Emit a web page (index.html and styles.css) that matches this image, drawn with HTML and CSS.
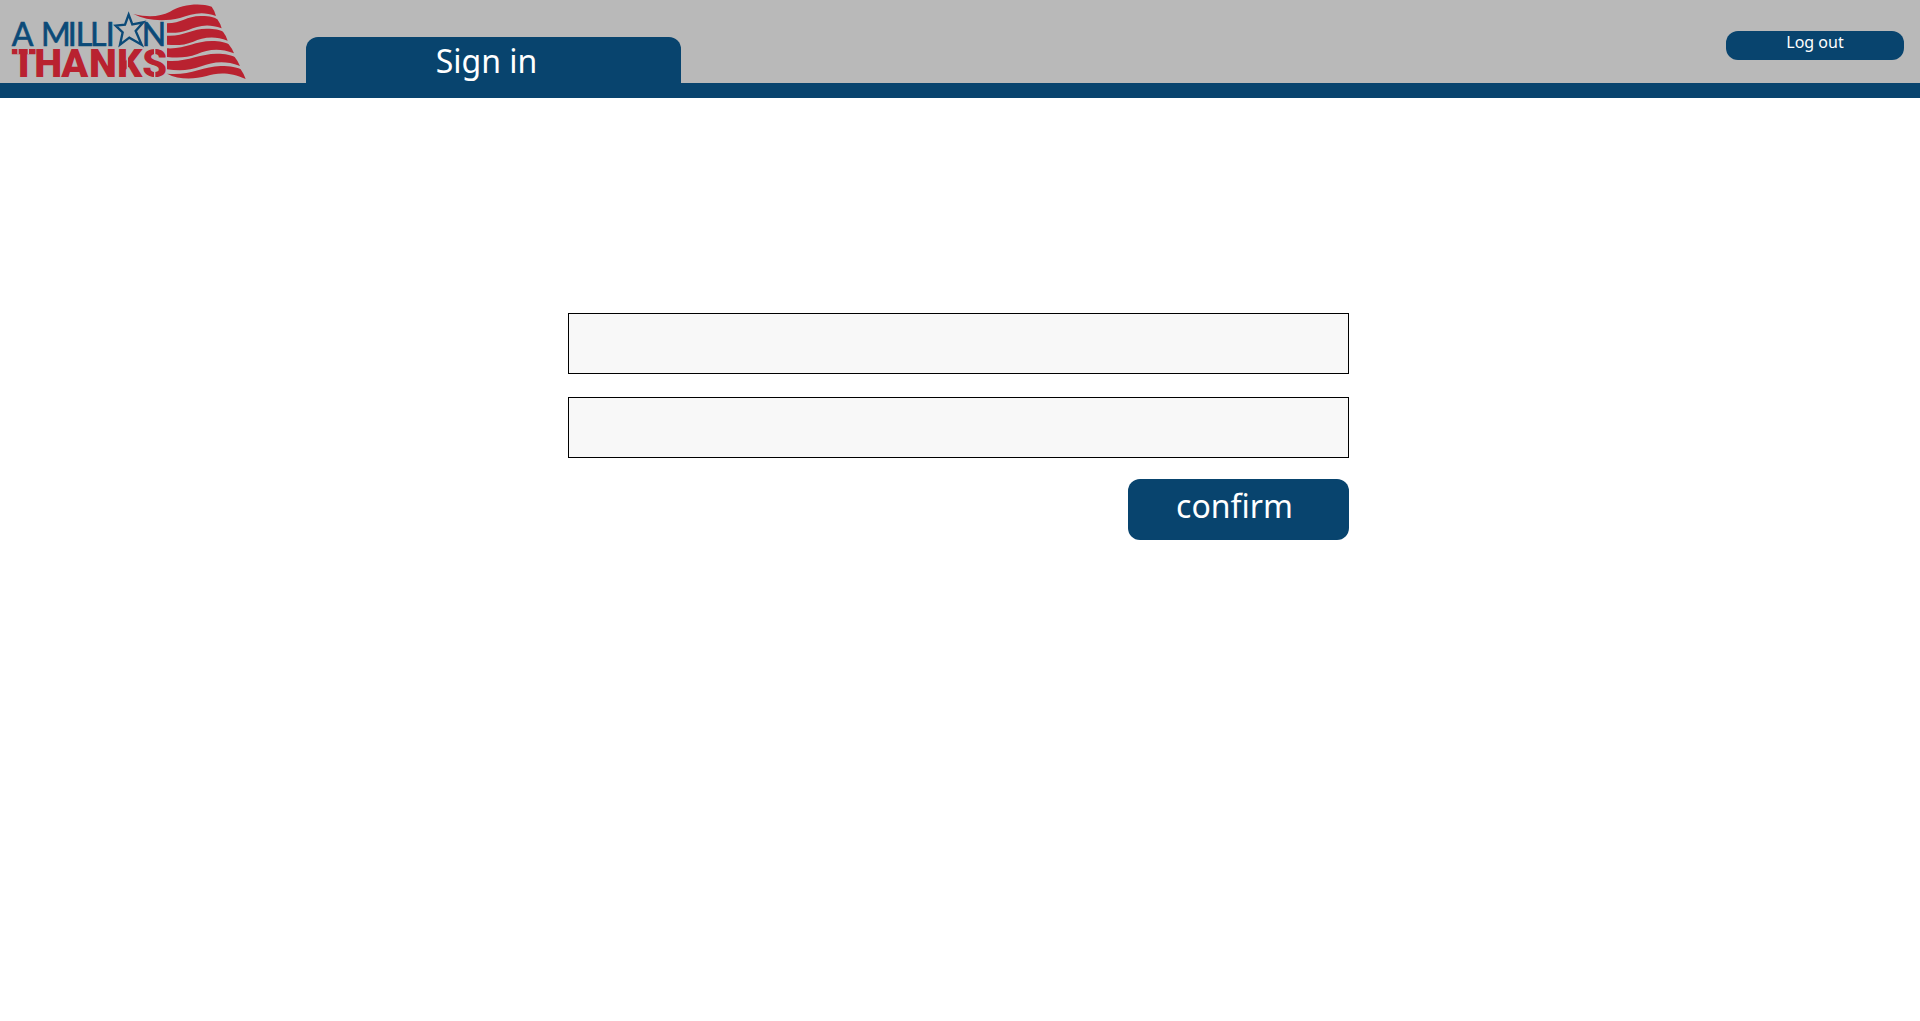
FILE: index.html
```html
<!DOCTYPE html>
<html lang="en">
<head>
<meta charset="utf-8">
<meta name="viewport" content="width=device-width, initial-scale=1">
<title>Sign in - A Million Thanks</title>
<link rel="stylesheet" href="styles.css">
</head>
<body>
<header class="site-header">
  <a class="logo" href="#" aria-label="A Million Thanks">
    <svg class="logo-art" viewBox="0 0 750 249" aria-hidden="true">
      <text class="logo-top" y="138" x="35 100 123 203 227 270 317">A MILLI</text>
      <text class="logo-top" y="138" x="425">N</text>
      <path class="logo-star" d="M386 44 L397 73 L430 67 L407 93 L425 134 L388 113 L360 134 L368 97 L347 77 L375 74 Z"/>
      <text class="logo-bottom" y="230" x="34 103 184 267 351 427">THANKS</text>
      <path class="logo-cuts" d="M54 143V163M85 143V163M382 143V232M464 143V166M464 210V232"/>
      <g class="logo-flag">
        <path d="M400 42 C450 54 480 49 510 35 C545 13 600 8 635 20 Q643 30 648 48 C605 32 575 42 540 54 C490 66 440 62 400 42 Z"/>
        <path d="M501 70 C545 70 560 47 605 48 C630 48 645 53 652 58 Q661 70 665 85 C620 68 590 80 567 89 C542 98 525 99 501 98 Z"/>
        <path d="M501 107 C550 110 575 86 620 86 C645 86 660 89 669 95 Q678 106 683 122 C638 105 605 115 580 125 C552 136 530 136 501 134 Z"/>
        <path d="M501 145 C555 148 585 123 635 123 C660 123 677 127 686 133 Q696 145 702 160 C655 142 622 150 592 162 C560 174 532 174 501 171 Z"/>
        <path d="M501 182 C560 187 598 161 650 161 C677 161 694 165 704 171 Q714 183 720 198 C670 179 636 188 604 199 C568 213 535 213 501 208 Z"/>
        <path d="M501 221 C565 229 607 199 662 198 C692 198 712 202 722 208 Q732 222 737 237 C690 215 650 218 620 228 C580 239 535 239 501 221 Z"/>
      </g>
    </svg>
  </a>
  <nav class="tabs">
    <a class="tab" href="#" aria-current="page">Sign in</a>
  </nav>
  <button class="button logout" type="button">Log out</button>
</header>
<main>
  <form class="signin">
    <input class="field" type="text" aria-label="Username" autocomplete="username">
    <input class="field" type="password" aria-label="Password" autocomplete="current-password">
    <button class="button confirm" type="submit">confirm</button>
  </form>
</main>
</body>
</html>
```

FILE: styles.css
```css
:root {
  --blue: #08446e;
  --gray: #b9b9b9;
  --red: #b92230;
}

* {
  box-sizing: border-box;
}

body {
  margin: 0;
  background: #fff;
  font-family: "Noto Sans", sans-serif;
}

.site-header {
  display: flex;
  align-items: flex-end;
  min-height: 98px;
  padding-right: 16px;
  background: var(--gray);
  border-bottom: 15px solid var(--blue);
}

.logo {
  flex: none;
  width: 250px;
  margin-right: 56px;
}

.logo-art {
  display: block;
  width: 100%;
}

.logo-top {
  fill: #0b4a78;
  stroke: #0b4a78;
  stroke-width: 2;
  font-family: Lato, sans-serif;
  font-size: 96px;
}

.logo-bottom {
  fill: var(--red);
  font-family: Roboto, sans-serif;
  font-size: 119px;
  font-weight: 900;
}

.logo-star {
  fill: var(--gray);
  stroke: #0b4a78;
  stroke-width: 7;
}

.logo-cuts {
  fill: none;
  stroke: var(--gray);
  stroke-width: 4;
}

.logo-flag {
  fill: var(--red);
}

.tab {
  display: block;
  width: 375px;
  padding: 6px 14px 4px 0;
  border-radius: 12px 12px 0 0;
  background: var(--blue);
  color: #fff;
  font-size: 32px;
  line-height: 36px;
  text-align: center;
  text-decoration: none;
}

.button {
  border: 0;
  border-radius: 12px;
  background: var(--blue);
  color: #fff;
  font-family: inherit;
  cursor: pointer;
}

.logout {
  width: 178px;
  margin: 0 0 23px auto;
  padding: 0 0 6px;
  font-size: 16px;
  line-height: 23px;
}

main {
  padding: 215px 3px 0 0;
}

.signin {
  display: flex;
  flex-direction: column;
  width: 781px;
  max-width: 100%;
  margin: 0 auto;
}

.field {
  width: 100%;
  height: 61px;
  margin-bottom: 23px;
  padding: 0 16px;
  border: 1px solid #000;
  border-radius: 0;
  background: #f8f8f8;
  font-family: inherit;
  font-size: 24px;
}

.confirm {
  align-self: flex-end;
  width: 221px;
  margin-top: -2px;
  padding: 0 8px 8px 0;
  font-size: 32px;
  line-height: 53px;
}
```
